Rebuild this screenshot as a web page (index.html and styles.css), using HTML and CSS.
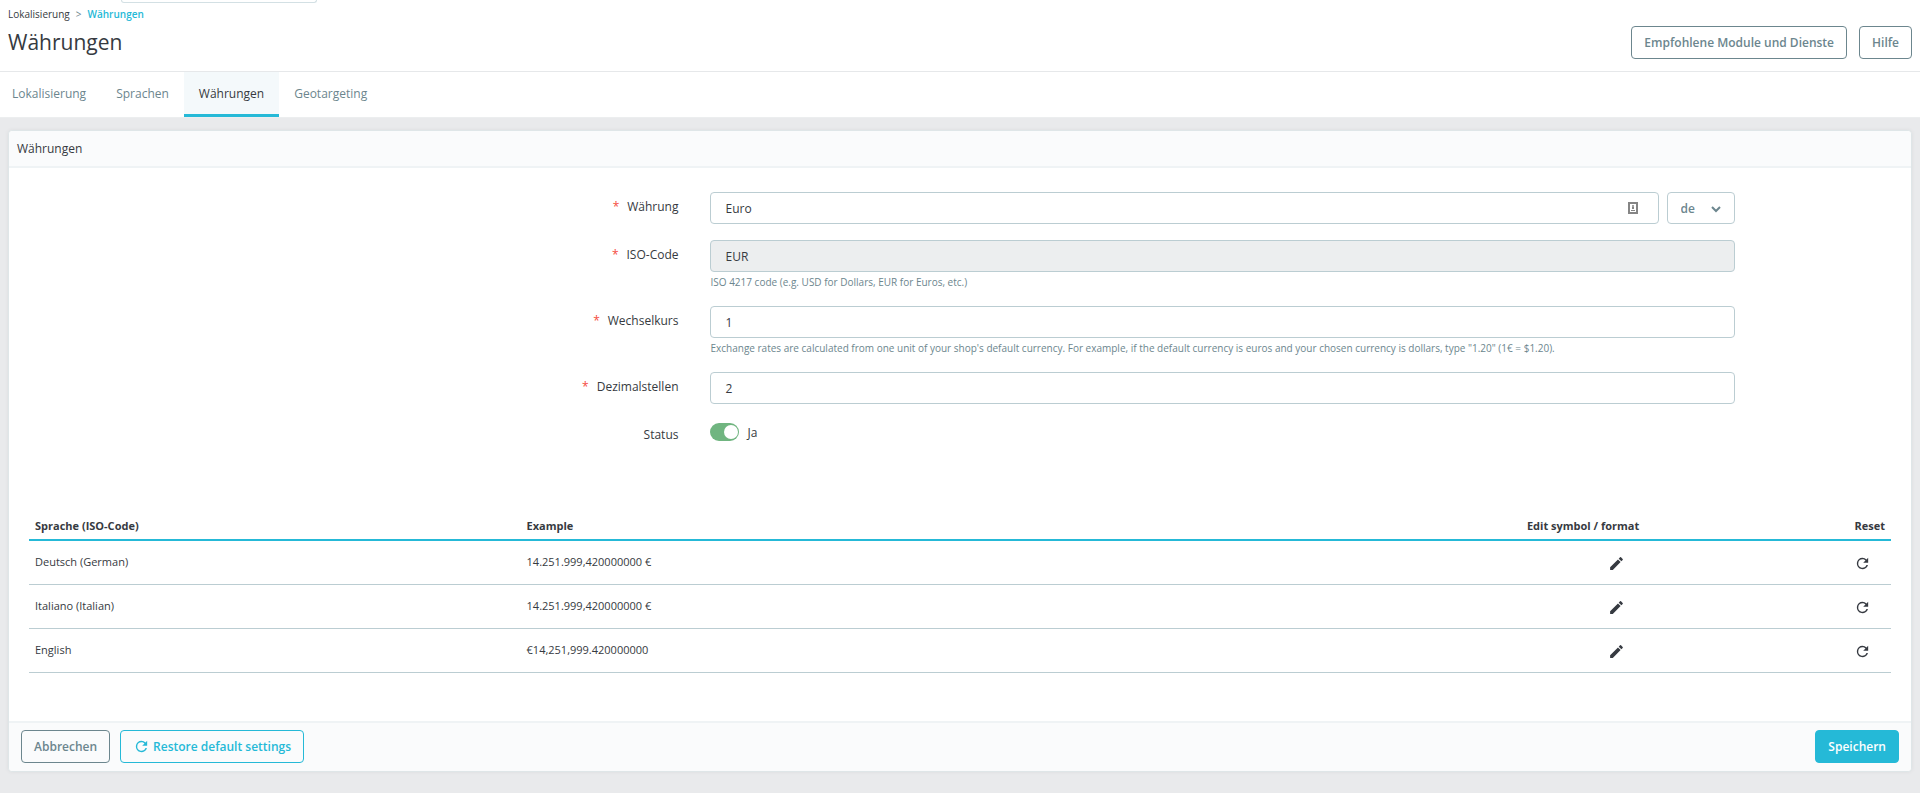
FILE: index.html
```html
<!DOCTYPE html>
<html lang="de">
<head>
  <meta charset="UTF-8">
  <meta name="viewport" content="width=device-width, initial-scale=1.0">
  <title>Währungen</title>
  <link rel="stylesheet" href="styles.css">
</head>
<body>
  <svg class="sprite" aria-hidden="true">
    <symbol id="icon-edit" viewBox="0 0 24 24">
      <path d="M3 17.25V21h3.75L17.81 9.94l-3.75-3.75L3 17.25zM20.71 7.04a1 1 0 0 0 0-1.41l-2.34-2.34a1 1 0 0 0-1.41 0l-1.83 1.83 3.75 3.75 1.83-1.83z"/>
    </symbol>
    <symbol id="icon-refresh" viewBox="0 0 24 24">
      <path d="M17.65 6.35A7.96 7.96 0 0 0 12 4a8 8 0 1 0 7.73 10h-2.08A6 6 0 1 1 12 6c1.66 0 3.14.69 4.22 1.78L13 11h7V4l-2.35 2.35z"/>
    </symbol>
  </svg>

  <header class="header">
    <div class="search-edge"></div>
    <nav class="breadcrumb">
      <a href="#">Lokalisierung</a>
      <span class="separator">&gt;</span>
      <a href="#" class="current">Währungen</a>
    </nav>
    <div class="title-row">
      <h1>Währungen</h1>
      <div class="toolbar">
        <button type="button" class="btn">Empfohlene Module und Dienste</button>
        <button type="button" class="btn">Hilfe</button>
      </div>
    </div>
  </header>

  <nav class="tabs">
    <a href="#">Lokalisierung</a>
    <a href="#">Sprachen</a>
    <a href="#" class="active">Währungen</a>
    <a href="#">Geotargeting</a>
  </nav>

  <main>
    <form class="card">
      <h2 class="card-header">Währungen</h2>

      <div class="card-body">
        <div class="form-group">
          <label for="name"><span class="required">*</span>Währung</label>
          <div class="field translatable">
            <div class="input-icon">
              <input type="text" id="name" value="Euro">
              <svg class="contact" width="10" height="12" viewBox="0 0 10 12">
                <rect x="1" y="1" width="8" height="10" fill="none" stroke="#858585" stroke-width="2"/>
                <circle cx="5" cy="4" r="1" fill="#858585"/>
                <path d="M4 5h2v2H4zM3 8h4v1H3z" fill="#858585"/>
              </svg>
            </div>
            <div class="lang">
              <select aria-label="Sprache">
                <option>de</option>
                <option>it</option>
                <option>en</option>
              </select>
              <svg width="10" height="7" viewBox="0 0 10 7"><path d="M1 1l4 4 4-4" fill="none" stroke="#6c868e" stroke-width="2"/></svg>
            </div>
          </div>
        </div>

        <div class="form-group">
          <label for="iso"><span class="required">*</span>ISO-Code</label>
          <div class="field">
            <input type="text" id="iso" value="EUR" disabled>
            <small>ISO 4217 code (e.g. USD for Dollars, EUR for Euros, etc.)</small>
          </div>
        </div>

        <div class="form-group">
          <label for="rate"><span class="required">*</span>Wechselkurs</label>
          <div class="field">
            <input type="text" id="rate" value="1">
            <small>Exchange rates are calculated from one unit of your shop's default currency. For example, if the default currency is euros and your chosen currency is dollars, type "1.20" (1€ = $1.20).</small>
          </div>
        </div>

        <div class="form-group">
          <label for="precision"><span class="required">*</span>Dezimalstellen</label>
          <div class="field">
            <input type="text" id="precision" value="2">
          </div>
        </div>

        <div class="form-group">
          <label for="status">Status</label>
          <div class="field switch">
            <input type="checkbox" id="status" checked>
            <span>Ja</span>
          </div>
        </div>

        <table>
          <thead>
            <tr>
              <th class="col-lang">Sprache (ISO-Code)</th>
              <th>Example</th>
              <th class="action">Edit symbol / format</th>
              <th class="action col-reset">Reset</th>
            </tr>
          </thead>
          <tbody>
            <tr>
              <td>Deutsch (German)</td>
              <td>14.251.999,420000000 €</td>
              <td class="action"><button type="button" aria-label="Edit"><svg><use href="#icon-edit"/></svg></button></td>
              <td class="action"><button type="button" aria-label="Reset"><svg><use href="#icon-refresh"/></svg></button></td>
            </tr>
            <tr>
              <td>Italiano (Italian)</td>
              <td>14.251.999,420000000 €</td>
              <td class="action"><button type="button" aria-label="Edit"><svg><use href="#icon-edit"/></svg></button></td>
              <td class="action"><button type="button" aria-label="Reset"><svg><use href="#icon-refresh"/></svg></button></td>
            </tr>
            <tr>
              <td>English</td>
              <td>€14,251,999.420000000</td>
              <td class="action"><button type="button" aria-label="Edit"><svg><use href="#icon-edit"/></svg></button></td>
              <td class="action"><button type="button" aria-label="Reset"><svg><use href="#icon-refresh"/></svg></button></td>
            </tr>
          </tbody>
        </table>
      </div>

      <div class="card-footer">
        <button type="button" class="btn">Abbrechen</button>
        <button type="button" class="btn btn-restore"><svg><use href="#icon-refresh"/></svg>Restore default settings</button>
        <button type="submit" class="btn btn-primary">Speichern</button>
      </div>
    </form>
  </main>
</body>
</html>
```

FILE: styles.css
```css
* {
  box-sizing: border-box;
}
body {
  margin: 0;
  background-color: #e9eaec;
  color: #363a41;
  font-family: "Open Sans", sans-serif;
  font-size: 12px;
  line-height: 16px;
}
a {
  color: inherit;
  text-decoration: none;
}
button, input, select {
  font-family: inherit;
  font-size: inherit;
}
svg {
  display: block;
}
.sprite {
  display: none;
}

/* header */
.header {
  background-color: #fff;
  border-bottom: 1px solid #e6e8ea;
  padding: 0 8px 12px;
}
/* lower edge of the search box above the title */
.search-edge {
  width: 196px;
  height: 3px;
  margin-left: 113px;
  border: 1px solid #d3e0e4;
  border-top: none;
  border-radius: 0 0 4px 4px;
}
.breadcrumb {
  display: flex;
  gap: 6px;
  padding-top: 3px;
  font-size: 10px;
}
.breadcrumb .separator {
  color: #6c868e;
}
.breadcrumb .current {
  color: #25b9d7;
  font-weight: 600;
}
.title-row {
  display: flex;
  justify-content: space-between;
  align-items: flex-start;
  padding-top: 4px;
}
h1 {
  margin: 0;
  font-size: 21px;
  font-weight: 400;
  line-height: 32px;
}
.toolbar {
  display: flex;
  gap: 12px;
}
.btn {
  height: 33px;
  padding: 0 12px;
  border: 1px solid #6c868e;
  border-radius: 4px;
  background-color: transparent;
  color: #6c868e;
  font-weight: 600;
  cursor: pointer;
}

/* tabs */
.tabs {
  display: flex;
  background-color: #fff;
  border-bottom: 1px solid #eceeef;
}
.tabs a {
  padding: 14px 15px 12px;
  border-bottom: 3px solid transparent;
  color: #6c868e;
}
.tabs a:first-child {
  padding-left: 12px;
}
.tabs a.active {
  background-color: #f4f9fb;
  border-bottom-color: #25b9d7;
  color: #363a41;
}

/* card */
main {
  padding: 12px 8px 22px;
}
.card {
  background-color: #fff;
  border: 1px solid #dfe6e8;
  border-radius: 4px;
  box-shadow: 0 0 4px rgba(0, 0, 0, 0.06);
}
.card-header {
  margin: 0;
  padding: 9px 8px;
  border-bottom: 2px solid #eff3f5;
  border-radius: 4px 4px 0 0;
  background-color: #fafbfc;
  font-size: 12px;
  font-weight: 500;
  line-height: 17px;
}
.card-body {
  padding: 24px 20px 48px;
}
.form-group {
  display: grid;
  grid-template-columns: 36.6% 55%;
  margin-bottom: 16px;
}
.form-group label {
  padding: 7px 32px 0 0;
  text-align: right;
}
.required {
  margin-right: 8px;
  color: #f54c3e;
}
.field input[type="text"] {
  display: block;
  width: 100%;
  height: 32px;
  padding: 0 14px;
  border: 1px solid #bbcdd2;
  border-radius: 4px;
  background-color: #fff;
  color: #363a41;
}
.field input[type="text"]:disabled {
  background-color: #eceeef;
}
.field small {
  display: block;
  padding-top: 3px;
  color: #6c868e;
  font-size: 10px;
  line-height: 15px;
}
.translatable {
  display: flex;
  gap: 8px;
}
.input-icon {
  position: relative;
  flex: 1;
}
.contact {
  position: absolute;
  top: 10px;
  right: 21px;
}
.lang {
  position: relative;
  width: 68px;
}
.lang select {
  width: 100%;
  height: 32px;
  padding: 0 13px;
  border: 1px solid #bbcdd2;
  border-radius: 4px;
  background-color: #fff;
  color: #6c868e;
  font-weight: 600;
  appearance: none;
}
.lang svg {
  position: absolute;
  top: 14px;
  right: 14px;
  pointer-events: none;
}
.switch {
  display: flex;
  align-items: flex-start;
  gap: 8px;
  padding-top: 3px;
}
.switch span {
  padding-top: 2px;
}
.switch input {
  display: flex;
  align-items: center;
  justify-content: flex-end;
  width: 29px;
  height: 18px;
  margin: 0;
  padding: 1px;
  border-radius: 9px;
  background-color: #70b580;
  appearance: none;
}
.switch input::before {
  content: "";
  width: 14px;
  height: 14px;
  border-radius: 50%;
  background-color: #fff;
}

/* language table */
table {
  width: 100%;
  margin-top: 69px;
  border-collapse: collapse;
  table-layout: fixed;
  font-size: 11px;
}
th, td {
  padding: 0 6px;
  text-align: left;
}
th {
  height: 28px;
  border-bottom: 2px solid #25b9d7;
  font-weight: 700;
}
td {
  height: 44px;
  border-bottom: 1px solid #bbcdd2;
}
.col-lang {
  width: 26.4%;
}
.col-reset {
  width: 13.2%;
}
.action {
  text-align: right;
}
td button {
  padding: 2px 14px 0;
  border: none;
  background: none;
  vertical-align: middle;
  cursor: pointer;
}
td svg {
  width: 17px;
  height: 17px;
  fill: #363a41;
}

/* footer */
.card-footer {
  display: flex;
  gap: 10px;
  padding: 7px 12px 8px;
  border-top: 2px solid #eff3f5;
  border-radius: 0 0 4px 4px;
  background-color: #fafbfc;
}
.btn-restore {
  display: flex;
  align-items: center;
  gap: 3px;
  border-color: #25b9d7;
  color: #25b9d7;
}
.btn-restore svg {
  width: 17px;
  height: 17px;
  fill: #25b9d7;
}
.btn-primary {
  margin-left: auto;
  border-color: #25b9d7;
  background-color: #25b9d7;
  color: #fff;
}
```
